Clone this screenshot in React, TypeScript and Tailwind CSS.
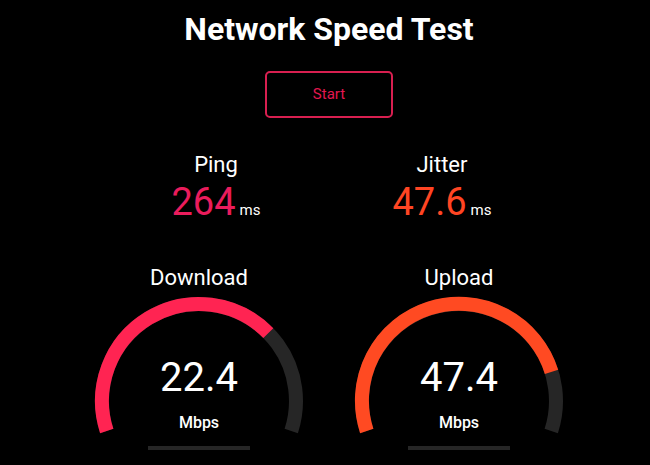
import React from "react";

const toAmount = (mbps: number) => 1 - 1 / Math.pow(1.3, Math.sqrt(mbps));

// arc point for a centre of (130, 109) and radius 97, angle in degrees
const point = (deg: number) => {
  const r = (deg * Math.PI) / 180;
  return [130 + 97 * Math.cos(r), 109 + 97 * Math.sin(r)];
};

const arcPath = (from: number, to: number) => {
  const [x1, y1] = point(from);
  const [x2, y2] = point(to);
  const large = to - from > 180 ? 1 : 0;
  return `M ${x1.toFixed(2)} ${y1.toFixed(2)} A 97 97 0 ${large} 1 ${x2.toFixed(2)} ${y2.toFixed(2)}`;
};

const Gauge = ({ label, value, color }: { label: string; value: number; color: string }) => {
  const start = -198;
  const end = 18;
  const fillEnd = start + toAmount(value) * (end - start);
  return (
    <div className="flex w-[260px] flex-col items-center">
      <div className="h-[26px] text-[22px] leading-[26px] text-white">{label}</div>
      <div className="relative mt-[1px] h-[150px] w-[260px]">
        <svg width="260" height="150" viewBox="0 0 260 150">
          <path d={arcPath(start, end)} fill="none" stroke="#262626" strokeWidth="14" />
          <path d={arcPath(start, fillEnd)} fill="none" stroke={color} strokeWidth="14" />
        </svg>
        <div className="absolute left-0 right-0 top-[64px] text-center text-[40px] leading-[44px] text-white">
          {value.toFixed(1)}
        </div>
        <div className="absolute left-0 right-0 top-[122px] text-center text-[16px] font-medium leading-[18px] text-white">
          Mbps
        </div>
      </div>
      <div className="mt-[4px] h-[4px] w-[102px] bg-[#262626]" />
    </div>
  );
};

const Stat = ({ label, value, color }: { label: string; value: string; color: string }) => (
  <div className="flex w-[226px] flex-col items-center">
    <div className="h-[26px] text-[22px] leading-[26px] text-white">{label}</div>
    <div className="mt-[3px] flex items-baseline gap-[4px]">
      <span className={`text-[38px] leading-[42px] ${color}`}>{value}</span>
      <span className="text-[15px] text-white">ms</span>
    </div>
  </div>
);

export default function App() {
  return (
    <div
      className="flex h-[465px] w-full flex-col items-center overflow-hidden bg-black pl-[8px]"
      style={{ fontFamily: "Roboto, 'Liberation Sans', sans-serif" }}
    >
      <h1 className="mt-[10px] h-[38px] text-[32px] font-bold leading-[38px] text-white">
        Network Speed Test
      </h1>
      <button className="mt-[23px] h-[47px] w-[128px] rounded-[5px] border-2 border-[#d81f50] text-[15px] text-[#e3174f]">
        Start
      </button>
      <div className="mt-[34px] flex">
        <Stat label="Ping" value="264" color="text-[#ea1c5c]" />
        <Stat label="Jitter" value="47.6" color="text-[#ff4523]" />
      </div>
      <div className="mt-[42px] flex">
        <Gauge label="Download" value={22.4} color="#ff2452" />
        <Gauge label="Upload" value={47.4} color="#ff4a22" />
      </div>
    </div>
  );
}
